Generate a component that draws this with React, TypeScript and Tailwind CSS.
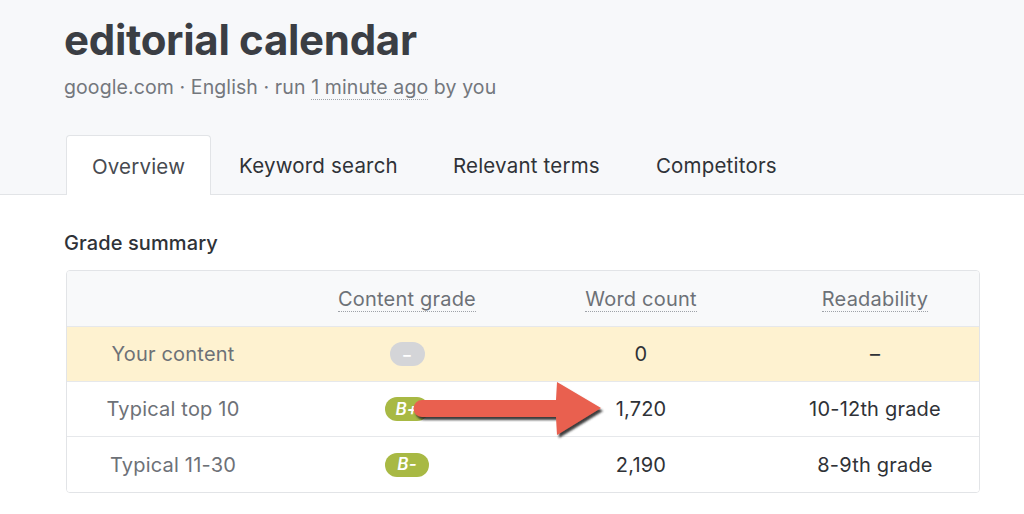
import React from "react";

const rows = [
  { label: "Your content", grade: "–", gradeKind: "none", words: "0", read: "–", hl: true },
  { label: "Typical top 10", grade: "B+", gradeKind: "b", words: "1,720", read: "10-12th grade", hl: false },
  { label: "Typical 11-30", grade: "B-", gradeKind: "b", words: "2,190", read: "8-9th grade", hl: false },
];

function Badge({ kind, text }: { kind: string; text: string }) {
  if (kind === "none") {
    return (
      <span className="inline-flex h-[24px] w-[35px] items-center justify-center rounded-full bg-[#d4d5d8] align-middle text-[15px] font-bold leading-none text-white">
        –
      </span>
    );
  }
  return (
    <span className="inline-flex h-[24px] w-[44px] items-center justify-center rounded-full bg-[#a8b944] align-middle text-[17px] font-semibold italic leading-none text-white">
      {text}
    </span>
  );
}

export default function App() {
  return (
    <div className="relative min-h-[514px] w-[1024px] bg-white text-[#3d4046]" style={{ fontFamily: "Inter, 'Noto Sans', sans-serif" }}>
      <div className="border-b border-[#e2e4e7] bg-[#f7f8fa] pl-[64px] pt-[14px]">
        <h1 className="text-[42px] font-bold leading-[52px] tracking-[-0.3px] text-[#3b3e44]">editorial calendar</h1>
        <div className="mt-[8px] text-[19.5px] leading-[26px] tracking-[0.1px] text-[#73777d]">
          google.com · English · run{" "}
          <span className="border-b border-dotted border-[#a0a4a9]">1 minute ago</span> by you
        </div>
        <div className="mt-[34px] flex items-end">
          <div className="-mb-px ml-[2px] flex h-[60px] w-[145px] items-center justify-center rounded-t-[4px] border border-b-0 border-[#e2e4e7] bg-white pt-[3px] text-[20.5px] tracking-[0.2px] text-[#474a50]">
            Overview
          </div>
          <div className="flex h-[60px] items-center pl-[28px] pt-[4px] text-[20.5px] tracking-[0.2px] text-[#2f3237]">Keyword search</div>
          <div className="flex h-[60px] items-center pl-[55px] pt-[4px] text-[20.5px] tracking-[0.2px] text-[#2f3237]">Relevant terms</div>
          <div className="flex h-[60px] items-center pl-[56px] pt-[4px] text-[20.5px] tracking-[0.2px] text-[#2f3237]">Competitors</div>
        </div>
      </div>

      <div className="pl-[64px] pt-[35px]">
        <div className="text-[20px] font-medium leading-[26px] tracking-[0.1px] text-[#2f3237]">Grade summary</div>
        <div className="ml-[2px] mt-[14px] w-[914px] overflow-hidden rounded-[4px] border border-[#e2e4e7]">
          <div className="h-[56px] border-b border-[#e6e8eb] bg-[#f8f9fa]">
            <div className="-ml-[11px] grid h-full w-[936px] grid-cols-4 items-center text-[20px] tracking-[0.2px] text-[#6d7177]">
              <div />
              <div className="text-center">
                <span className="border-b border-dotted border-[#9ea2a8]">Content grade</span>
              </div>
              <div className="text-center">
                <span className="border-b border-dotted border-[#9ea2a8]">Word count</span>
              </div>
              <div className="text-center">
                <span className="border-b border-dotted border-[#9ea2a8]">Readability</span>
              </div>
            </div>
          </div>
          {rows.map((r, i) => (
            <div
              key={r.label}
              className={`h-[55px] ${r.hl ? "bg-[#fef2d0]" : "bg-white"} ${i < rows.length - 1 ? "border-b border-[#e6e8eb]" : ""}`}
            >
              <div className="-ml-[11px] grid h-full w-[936px] grid-cols-4 items-center text-[20px] tracking-[0.2px]">
                <div className="text-center text-[#6d7177]">{r.label}</div>
                <div className="flex justify-center">
                  <Badge kind={r.gradeKind} text={r.grade} />
                </div>
                <div className="text-center text-[#2f3237]">{r.words}</div>
                <div className="text-center text-[#2f3237]">{r.read}</div>
              </div>
            </div>
          ))}
        </div>
      </div>

      <svg className="pointer-events-none absolute left-0 top-0" width="1024" height="514" viewBox="0 0 1024 514">
        <defs>
          <filter id="sh" x="-10%" y="-30%" width="130%" height="180%">
            <feDropShadow dx="2" dy="3" stdDeviation="1.3" floodColor="#2a2a2a" floodOpacity="0.9" />
          </filter>
        </defs>
        <path
          d="M422 400 L556 400 L557 382 L601 408 L557 435 L556 417 L422 417 A8.5 8.5 0 0 1 422 400 Z"
          fill="#e9604f"
          filter="url(#sh)"
        />
      </svg>
    </div>
  );
}
